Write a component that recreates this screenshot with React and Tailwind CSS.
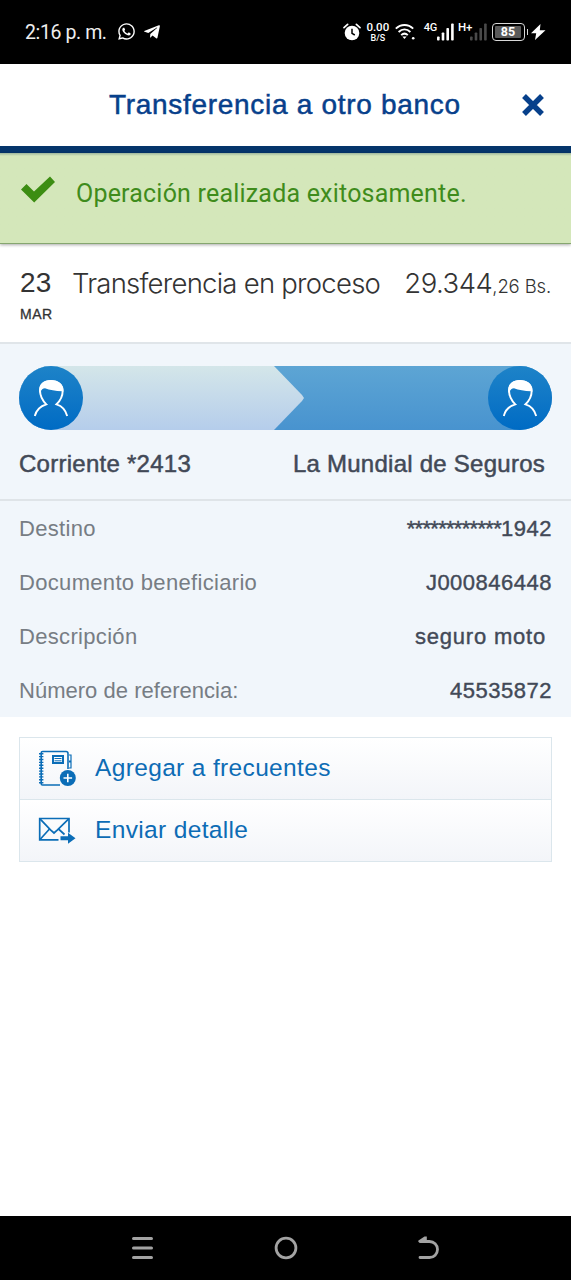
import React from "react";
import { FaWhatsapp, FaTelegramPlane } from "react-icons/fa";

const details = [
  { label: "Destino", masked: "************", value: "1942" },
  { label: "Documento beneficiario", value: "J000846448" },
  { label: "Descripción", value: "seguro moto", className: "mr-[6px] tracking-[0.8px]" },
  { label: "Número de referencia:", value: "45535872", labelClassName: "tracking-[0.02px]" },
];

const AlarmIcon = () => (
  <svg width="18" height="18" viewBox="0 0 18 18" fill="none">
    <circle cx="9" cy="10" r="7.3" fill="#fff" />
    <path d="M1 4.6 4.6 1.4M17 4.6 13.4 1.4" stroke="#fff" strokeWidth="1.7" strokeLinecap="round" />
    <path d="M9 5.8V10.3L11.8 12" stroke="#000" strokeWidth="1.5" />
  </svg>
);

const WifiIcon = () => (
  <svg width="20" height="16" viewBox="0 0 20 16" fill="none" stroke="#fff" strokeWidth="1.9">
    <path d="M.8 4.6C5.8-.2 13.2-.2 18.2 4.6M3.6 8C7.2 4.7 11.8 4.7 15.4 8" />
    <path d="M6.2 11.2C8.2 9.2 10.8 9.2 12.8 11.2" />
    <path d="M7.4 12.4H11.6L9.5 15Z" fill="#fff" stroke="none" />
    <circle cx="18.2" cy="14.2" r="1.3" fill="#fff" stroke="none" />
  </svg>
);

const SignalIcon = ({ color }) => (
  <svg width="17" height="18" viewBox="0 0 17 18" fill={color}>
    <rect x="0" y="13.5" width="2.6" height="4" rx=".8" />
    <rect x="4.7" y="9.5" width="2.6" height="8" rx=".8" />
    <rect x="9.4" y="5" width="2.6" height="12.5" rx=".8" />
    <rect x="14.1" y=".5" width="2.6" height="17" rx=".8" />
  </svg>
);

const StatusBar = () => (
  <div className="flex h-[63.5px] shrink-0 items-center bg-black pl-[25px] font-['Roboto',sans-serif] text-white">
    <span className="mt-px text-[19.5px] tracking-[-0.4px] text-[#eeeeee]">2:16 p. m.</span>
    <FaWhatsapp className="ml-[10px] size-[19px]" />
    <FaTelegramPlane className="ml-[7px] size-[18px]" />
    <div className="ml-auto flex items-center pr-[25px]">
      <AlarmIcon />
      <div className="ml-[5px] flex w-[24px] flex-col items-center font-medium leading-none">
        <span className="text-[11.5px]">0.00</span>
        <span className="text-[9px] leading-[8px]">B/S</span>
      </div>
      <span className="ml-[5px]">
        <WifiIcon />
      </span>
      <span className="ml-[9px] mb-[9px] text-[11px] font-medium leading-none tracking-[-0.3px]">4G</span>
      <span>
        <SignalIcon color="#fff" />
      </span>
      <span className="ml-[4px] mb-[9px] text-[11.5px] font-medium leading-none">H+</span>
      <span className="-ml-[3px]">
        <SignalIcon color="#4a4a4a" />
      </span>
      <div className="ml-[5px] flex h-[18px] w-[33px] items-center justify-center rounded-[4px] border-[1.5px] border-[#d8d8d8] p-px">
        <span className="flex h-[12px] w-[26px] items-center justify-center rounded-[1px] bg-[#5a5a5a] text-[12.5px] font-bold leading-none">
          85
        </span>
      </div>
      <span className="ml-[2px] h-[6px] w-[1.5px] bg-[#d8d8d8]" />
      <svg className="ml-[3px]" width="15" height="16" viewBox="0 0 15 16">
        <path d="M9.5 0 0 9.2H5.2L4 16 14.5 6.2H8.8Z" fill="#fff" />
      </svg>
    </div>
  </div>
);

const PersonIcon = () => (
  <span className="size-16 rounded-full bg-linear-to-b from-[#1d83c8] to-[#006bc4]">
    <svg width="64" height="64" viewBox="0 0 64 64" fill="none">
      <path
        d="M15.8 50C17.3 44 21.5 40 27.3 38.3C23.5 34.500 21 30 21 24.500C21 18.500 25.500 15 32 15S43.700 18.500 43.700 24.500C43.700 30 41.500 34.500 37.500 38.300C43 40 46.700 44 48.200 50"
        stroke="#fff"
        strokeWidth="1.9"
      />
      <path d="M20.2 26.5C19.5 18 24.5 14 32 14S45 18.5 44.3 26L43 25.300C36.500 25 30.500 24 26 22.300C23.800 22.300 22.300 23.500 21.500 26.500Z" fill="#fff" />
    </svg>
  </span>
);

const AddContactIcon = () => (
  <svg width="38" height="37" viewBox="0 0 38 37" fill="none" stroke="#0b6db7" strokeWidth="1.6">
    <path d="M22 35H4.5Q3.2 35 3.2 33.7V3Q3.2 1.5 4.7 1.5H28Q30 1.5 30 3.5V19" />
    <path d="M3.2 3V34" strokeWidth="4.4" strokeDasharray="1.4 1.5" />
    <path d="M31 5H33V11H31M31 12H33V18H31" strokeWidth="1.2" />
    <rect x="15" y="6" width="10" height="7" strokeWidth="2" />
    <path d="M16.5 8.5H23.5M16.5 10.8H23.5" strokeWidth="1" />
    <circle cx="29.8" cy="28" r="8" fill="#0b6db7" stroke="none" />
    <path d="M25.5 28H34.1M29.8 23.7V32.3" stroke="#fff" strokeWidth="1.6" />
  </svg>
);

const SendMailIcon = () => (
  <svg width="38" height="27" viewBox="0 0 38 27" fill="none" stroke="#0b6db7" strokeWidth="1.7">
    <path d="M20.5 22.8H1.7V1.5H31V15.5" />
    <path d="M2 1.8 12.5 12.8 16 16 19.5 12.8 30.700 1.8" />
    <path d="M2 22.500 11.500 12M20.500 12 26.500 17.500" />
    <path d="M22.500 19.200H30V15.800L37.500 21.300L30 26.700V23.300H22.500Z" fill="#0b6db7" stroke="none" />
  </svg>
);

const NavBar = () => (
  <div className="flex h-[64px] shrink-0 items-center justify-between bg-black px-[132px]">
    <svg width="21" height="24" viewBox="0 0 21 24" stroke="#a3a3a3" strokeWidth="3" strokeLinecap="round">
      <path d="M1.5 2.5H19.5M1.5 12H19.5M1.5 21.5H19.5" />
    </svg>
    <svg width="24" height="24" viewBox="0 0 24 24" fill="none" stroke="#a3a3a3" strokeWidth="2.8">
      <circle cx="12" cy="12" r="9.900" />
    </svg>
    <svg width="21" height="24" viewBox="0 0 21 24" fill="none" stroke="#a3a3a3" strokeWidth="2.8" strokeLinecap="round">
      <path d="M2 21.500H11.500A8 8 0 0 0 11.500 5.500H2" />
      <path d="M.5 6V4.600L6.500 .5H8.800V5Z" fill="#a3a3a3" stroke="none" />
    </svg>
  </div>
);

const App = () => {
  return (
    <div className="flex h-[1280px] w-[571px] flex-col overflow-hidden bg-white font-['Liberation_Sans',Arial,sans-serif]">
      <StatusBar />

      <header className="flex h-[89.5px] shrink-0 items-center border-b-[7px] border-[#05356b] pl-[109px] pr-[27px]">
        <h1 className="text-[28px] leading-none tracking-[0.7px] text-[#07408b] [-webkit-text-stroke:0.5px_#07408b]">
          Transferencia a otro banco
        </h1>
        <svg className="ml-auto" width="22" height="22" viewBox="0 0 22 22" stroke="#07408b" strokeWidth="5.4">
          <path d="M2 2 20 20M20 2 2 20" />
        </svg>
      </header>

      <div className="z-10 flex h-[91px] shrink-0 border-b border-[#86a670] bg-[#d4e7ba] bg-linear-to-b from-[#9db69c] to-[#d4e7ba] to-[3px] pl-[21px] pt-[23px] shadow-[0_1px_3px_#00000055]">
        <svg className="shrink-0" width="35" height="28" viewBox="0 0 35 28">
          <path d="M0 13.5 5.5 8 13 15.5 29 .5 34 6 13.2 26.5Z" fill="#3c8d12" />
        </svg>
        <p className="ml-[20px] mt-[4px] font-['Roboto',sans-serif] text-[25px] leading-[28px] tracking-[0.2px] text-[#3f8c1c]">
          Operación realizada exitosamente.
        </p>
      </div>

      <div className="flex h-[98px] shrink-0 items-start px-[20px] pt-[25px] text-[#333333]">
        <div className="w-[52px] shrink-0">
          <p className="text-[28px] leading-[28px] tracking-[0.3px]">23</p>
          <p className="mt-[9px] text-[14px] leading-[16px] tracking-[0.5px] [-webkit-text-stroke:0.3px_#333333]">MAR</p>
        </div>
        <p className="whitespace-nowrap font-['Inter',sans-serif] text-[27.5px] font-light leading-[28px] tracking-[-0.75px]">
          Transferencia en proceso
        </p>
        <p className="ml-auto whitespace-nowrap font-['Inter',sans-serif] text-[27.5px] font-light leading-[28px] tracking-[-0.5px]">
          29.344<span className="text-[18.5px] tracking-[-0.15px]">,26 Bs.</span>
        </p>
      </div>

      <section className="h-[375px] shrink-0 border-t-2 border-[#e0e5e9] bg-[#f1f6fb]">
        <div className="px-[19px] pt-[22px]">
          <div className="flex h-16 rounded-full bg-linear-to-b from-[#5da5d4] to-[#4893cf]">
            <div className="w-[286px] rounded-l-full bg-linear-to-b from-[#d4e6e9] to-[#b5cdeb] [clip-path:polygon(0_0,255px_0,283px_29px,285px_32px,283px_35px,255px_100%,0_100%)]">
              <div className="flex">
                <PersonIcon />
              </div>
            </div>
            <div className="ml-auto flex">
              <PersonIcon />
            </div>
          </div>
          <div className="flex justify-between pr-[7px] pt-[19px] text-[24px] leading-[30px] text-[#424957] [-webkit-text-stroke:0.5px_#424957]">
            <span className="tracking-[0.26px]">Corriente *2413</span>
            <span className="tracking-[0.25px]">La Mundial de Seguros</span>
          </div>
        </div>

        <ul className="mt-[20px] border-t-2 border-[#dfe4e8] text-[22px]">
          {details.map((item) => (
            <li key={item.label} className="flex h-[54px] items-center justify-between px-[19px]">
              <span className={`text-[#777d84] ${item.labelClassName || "tracking-[0.32px]"}`}>{item.label}</span>
              <span className={`text-[#424957] [-webkit-text-stroke:0.4px_#424957] ${item.className || "tracking-[0.5px]"}`}>
                {item.masked && <span className="tracking-[-0.7px]">{item.masked}</span>}
                {item.value}
              </span>
            </li>
          ))}
        </ul>
      </section>

      <div className="mx-[19px] mt-[20px] border border-[#dbe6ec] text-[24.5px] text-[#0d6cb5]">
        <button className="flex h-[62px] w-full items-center border-b border-[#dbe6ec] bg-linear-to-b from-white to-[#f3f5f9] pl-[18px]">
          <AddContactIcon />
          <span className="ml-[19px] tracking-[0.35px]">Agregar a frecuentes</span>
        </button>
        <button className="flex h-[61px] w-full items-center bg-linear-to-b from-white to-[#f3f5f9] pl-[18px]">
          <SendMailIcon />
          <span className="ml-[19px] tracking-[0.35px]">Enviar detalle</span>
        </button>
      </div>

      <div className="flex-1" />
      <NavBar />
    </div>
  );
};

export default App;
